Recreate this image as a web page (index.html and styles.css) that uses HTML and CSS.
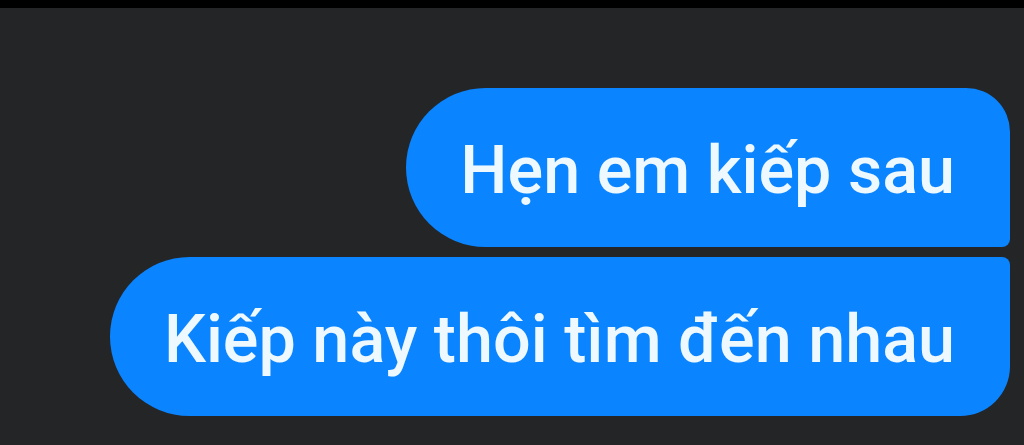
FILE: index.html
```html
<!DOCTYPE html>
<html lang="vi">
<head>
<meta charset="utf-8">
<link rel="stylesheet" href="styles.css">
</head>
<body>
<div class="topbar"></div>
<main class="thread">
  <div class="bubble first">Hẹn em kiếp sau</div>
  <div class="bubble last">Kiếp này thôi tìm đến nhau</div>
</main>
</body>
</html>
```
FILE: styles.css
```css
html, body {
  margin: 0;
  padding: 0;
  background: #242526;
  height: 100%;
  overflow: hidden;
}
.topbar {
  height: 8px;
  background: #000;
}
.thread {
  display: flex;
  flex-direction: column;
  align-items: flex-end;
  gap: 10px;
  padding: 80px 14px 0 0;
}
.bubble {
  box-sizing: border-box;
  height: 159px;
  display: flex;
  align-items: center;
  padding: 4px 55px 0 54px;
  background: #0a84ff;
  color: #eef8ff;
  font-family: Roboto, "Open Sans", sans-serif;
  font-weight: 500;
  font-size: 66.5px;
  white-space: nowrap;
}
.first {
  border-radius: 80px 44px 8px 80px;
}
.last {
  border-radius: 80px 8px 50px 80px;
}
```
